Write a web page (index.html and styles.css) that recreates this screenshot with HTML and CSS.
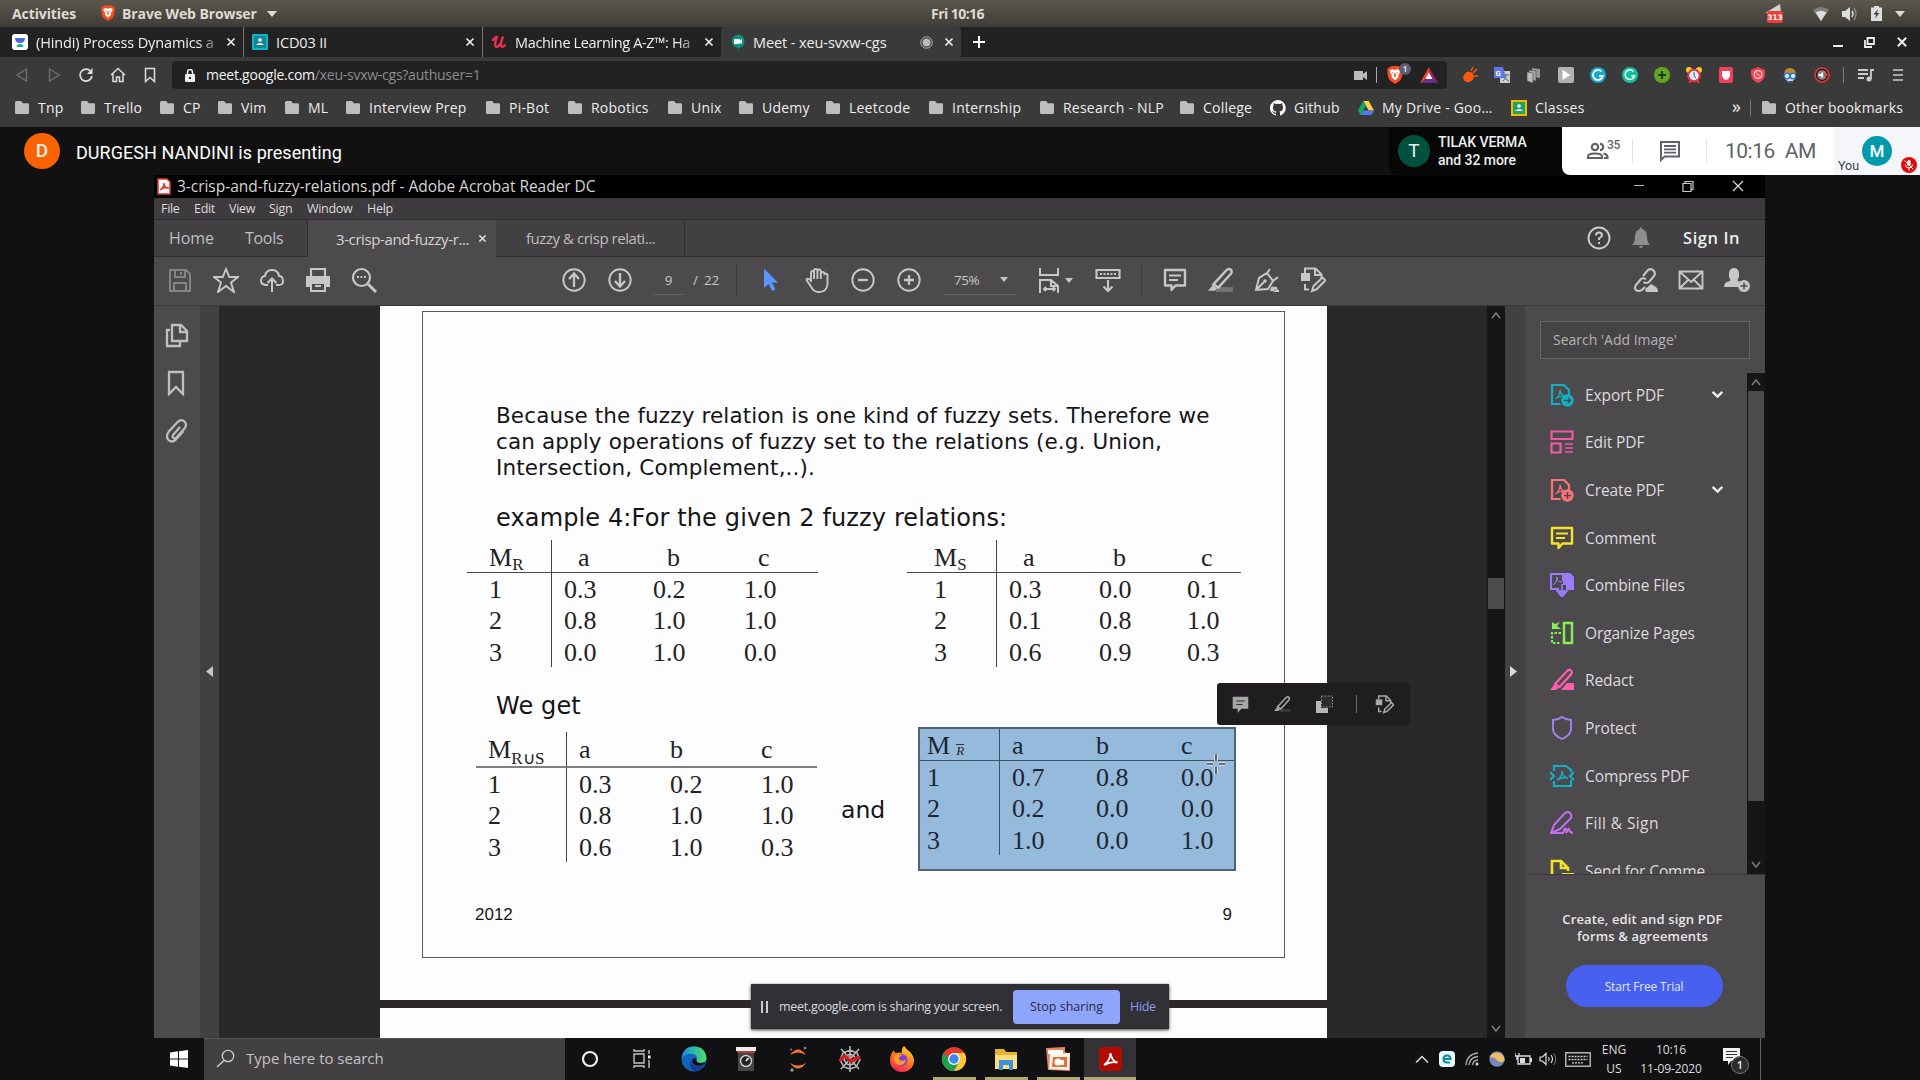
FILE: index.html
```html
<!DOCTYPE html>
<html lang="en">
<head>
<meta charset="utf-8">
<title>Meet - xeu-svxw-cgs</title>
<link rel="stylesheet" href="styles.css">
</head>
<body>
<svg class="defs" width="0" height="0">
  <defs>
    <symbol id="folder" viewBox="0 0 14 13"><path d="M0 1.5Q0 0 1.5 0H6l2 2.2h4.8Q14 2.2 14 3.5v8q0 1.5-1.3 1.5H1.3Q0 13 0 11.500z" fill="#bdbdbd"/></symbol>
    <symbol id="x" viewBox="0 0 10 10"><path d="M1.500 1.500l7 7M8.500 1.500l-7 7" stroke="currentColor" stroke-width="1.700" fill="none"/></symbol>
    <symbol id="brave" viewBox="0 0 16 18"><path d="M4.500 0h7l1.500 1.600 1.700-.2L16 4l-.6 1.500.3 2.500-2 6L8 18l-5.700-4-2-6 .3-2.500L0 4l1.300-2.600L3 1.600z" fill="#fb4a1d"/><path d="M3 4l2.500-.8L8 4l2.500-.8L13 4l.3 2-2 3 .2 2L8 14.500 4.500 11l.2-2-2-3z" fill="#fff"/><path d="M4.300 6l2.200.8-.5 1zM11.700 6l-2.200.8.5 1zM7.300 7h1.400v2.300l.8.700L8 11l-1.500-1 .8-.7z" fill="#fb4a1d"/></symbol>
    <symbol id="pen" viewBox="0 0 24 24"><path d="M5 16L17.500 2.500q2-1.500 3.500 0t.3 3.500L9.500 19z" fill="none" stroke="currentColor" stroke-width="2.200"/><path d="M4.500 16.500l4 3.500-2.500 2H0z" fill="currentColor"/></symbol>
    <symbol id="note" viewBox="0 0 24 24"><path d="M2 2h20v15.500H12.500L8.500 22v-4.500H2z" fill="none" stroke="currentColor" stroke-width="2.400" stroke-linejoin="round"/><path d="M6 7.500h12M6 12h9" stroke="currentColor" stroke-width="1.900"/></symbol>
    <symbol id="editdoc" viewBox="0 0 26 26"><path d="M1 6h9v8H1z" fill="currentColor"/><path d="M5 6V1.500h10.500l6 6V11M15 2v6h6M5 17v5.500h4" fill="none" stroke="currentColor" stroke-width="2"/><path d="M12 24l1.500-5 9-8.500 3 2.800-9 9z" fill="none" stroke="currentColor" stroke-width="2"/></symbol>
    <symbol id="pdf" viewBox="0 0 24 24"><path d="M10.500 21H2V2h12l5 5v5" fill="none" stroke="currentColor" stroke-width="2.200"/><path d="M5.500 16q3.500-2 4.500-8 .2-2 .2-.5.300 4.500 5 6-4.500-1-9 1.500" fill="none" stroke="currentColor" stroke-width="1.300"/></symbol>
    <symbol id="down" viewBox="0 0 12 8"><path d="M1.500 1.500L6 6l4.500-4.500" fill="none" stroke="currentColor" stroke-width="2.200"/></symbol>
    <symbol id="arrow" viewBox="0 0 10 6"><path d="M0 0h10L5 6z" fill="currentColor"/></symbol>
    <symbol id="thin" viewBox="0 0 10 8"><path d="M1 7l4-5 4 5" fill="none" stroke="currentColor" stroke-width="1.700"/></symbol>
  </defs>
</svg>

<header class="gnome">
  <span class="g-act">Activities</span>
  <svg class="g-brave" width="14" height="16"><use href="#brave"/></svg>
  <span class="g-app">Brave Web Browser</span>
  <svg width="10" height="6"><use href="#arrow"/></svg>
  <span class="g-clock">Fri 10:16</span>
  <div class="g-tray">
    <svg width="18" height="20" viewBox="0 0 18 20"><path d="M0 9L15 0l1 9z" fill="#ccd6dd"/><rect x="2" y="7" width="16" height="12" rx="2" fill="#f23c36"/><text x="10" y="16" text-anchor="middle" font-size="7.500" fill="#fff" font-family="DejaVu Sans">313</text></svg>
    <svg class="t-wifi" width="16" height="14" viewBox="0 0 16 14"><path d="M0 3q8-6 16 0L8 14z" fill="#827f79"/><path d="M2.500 5.500q5.500-3.500 11 0L8 14z" fill="#ddd"/></svg>
    <svg width="16" height="14" viewBox="0 0 16 14"><path d="M0 4h3l5-4v14l-5-4H0z" fill="#ddd"/><path d="M10 4q2 3 0 6" stroke="#ddd" stroke-width="1.500" fill="none"/><path d="M12 1q4 6 0 12" stroke="#8b8881" stroke-width="1.500" fill="none"/></svg>
    <svg width="11" height="15" viewBox="0 0 11 15"><path d="M3 0h5v1.500h3V15H0V1.500h3z" fill="#ddd"/><path d="M7 3L2.500 8.500h2.700L4 12.500 8.500 7H5.800z" fill="#45433d"/></svg>
    <svg width="10" height="6"><use href="#arrow"/></svg>
  </div>
</header>

<nav class="tabs">
  <div class="tab">
    <svg width="16" height="16" viewBox="0 0 16 16"><rect width="16" height="16" rx="3" fill="#fff"/><path d="M3 4h10q0 5-5 5T3 4z" fill="#4b66ee"/><path d="M4.500 13q.5-3 3.500-3t3.500 3z" fill="#15b87b"/></svg>
    <span class="t-text fade">(Hindi) Process Dynamics a</span><svg class="x" width="10" height="10"><use href="#x"/></svg>
  </div>
  <div class="tab">
    <svg width="16" height="16" viewBox="0 0 16 16"><rect width="16" height="16" rx="1" fill="#10b4c8"/><rect x="2" y="2" width="12" height="12" fill="#138694"/><circle cx="8" cy="6" r="1.800" fill="#fff"/><path d="M4 11q4-4 8 0z" fill="#fff"/></svg>
    <span class="t-text">ICD03 II</span><svg class="x" width="10" height="10"><use href="#x"/></svg>
  </div>
  <div class="tab nosep">
    <svg width="16" height="16" viewBox="0 0 16 16"><path d="M1.500 7q2.500-4.500 4.300-4-1.800 5-1.600 8 .3 2.700 2.300 1.800T10 8.500L12 2.500M12 2.500q-2.500 7-1.700 9.500 1.200 2.200 4.200-1.500" fill="none" stroke="#ef2d4c" stroke-width="2.300"/></svg>
    <span class="t-text fade tight">Machine Learning A-Z™: Ha</span><svg class="x" width="10" height="10"><use href="#x"/></svg>
  </div>
  <div class="tab active">
    <svg width="16" height="16" viewBox="0 0 16 16"><path d="M8 .5a6.800 6.800 0 0 1 1.500 13.300L8 16v-2A6.800 6.800 0 0 1 8 .5z" fill="#0b9683"/><path d="M4 5h6v1.500L12 5v5l-2-1.300V10H4z" fill="#fff"/></svg>
    <span class="t-text">Meet - xeu-svxw-cgs</span>
    <svg class="rec" width="13" height="13" viewBox="0 0 13 13"><circle cx="6.500" cy="6.500" r="5.700" fill="none" stroke="#b8b8bf" stroke-width="1"/><circle cx="6.500" cy="6.500" r="4" fill="#b8b8bf"/></svg>
    <svg class="x" width="10" height="10"><use href="#x"/></svg>
  </div>
  <svg class="plus" width="12" height="12" viewBox="0 0 12 12"><path d="M6 0v12M0 6h12" stroke="#fff" stroke-width="2"/></svg>
  <div class="winctl">
    <svg width="10" height="12" viewBox="0 0 10 12"><path d="M0 10h10" stroke="#eee" stroke-width="2"/></svg>
    <svg width="11" height="11" viewBox="0 0 11 11"><path d="M3.500 1h6.500v6H3.500zM1 3v7h7" fill="none" stroke="#eee" stroke-width="1.800"/></svg>
    <svg width="12" height="12"><use href="#x"/></svg>
  </div>
</nav>

<div class="bar">
  <div class="navs">
    <svg width="14" height="16" viewBox="0 0 14 16"><path d="M11.500 2v12L2 8z" fill="none" stroke="#6d6d6d" stroke-width="1.400"/></svg>
    <svg width="14" height="16" viewBox="0 0 14 16"><path d="M2.500 2v12L12 8z" fill="none" stroke="#6d6d6d" stroke-width="1.400"/></svg>
    <svg width="16" height="16" viewBox="0 0 16 16"><path d="M12.500 4A6 6 0 1 0 14 9" fill="none" stroke="#ddd" stroke-width="1.700"/><path d="M14.500 1v6H9z" fill="#ddd"/></svg>
    <svg width="16" height="16" viewBox="0 0 16 16"><path d="M1 8l7-6.500L15 8M3 7v7.500h3.500V10h3v4.500H13V7" fill="none" stroke="#ddd" stroke-width="1.500"/></svg>
    <svg width="16" height="16" viewBox="0 0 16 16"><path d="M3.500 1.500h9v13L8 10.500l-4.500 4z" fill="none" stroke="#ddd" stroke-width="1.500"/></svg>
  </div>
  <div class="url">
    <svg width="10" height="13" viewBox="0 0 10 13"><rect y="5" width="10" height="8" rx="1" fill="#eee"/><path d="M2.500 6V3a2.500 2.500 0 0 1 5 0v3" fill="none" stroke="#eee" stroke-width="1.500"/><path d="M4 8h2v2H4z" fill="#222"/></svg>
    <span class="u-host">meet.google.com</span><span class="u-path">/xeu-svxw-cgs?authuser=1</span>
    <div class="u-right">
      <svg width="13" height="9" viewBox="0 0 13 9"><path d="M0 0h9v3l4-3v9L9 6v3H0z" fill="#bbb"/></svg>
      <i class="vline"></i>
      <span class="shield"><svg width="16" height="18"><use href="#brave"/></svg><b>1</b></span>
      <svg width="18" height="16" viewBox="0 0 18 16"><path d="M9 0L0 16h9z" fill="#ff4724"/><path d="M9 0l9 16H9z" fill="#9e1f63"/><path d="M0 16h18l-5-4H5z" fill="#662d91"/><path d="M9 5.500L5.500 12h7z" fill="#fff"/></svg>
    </div>
  </div>
  <div class="exts">
    <svg viewBox="0 0 16 16"><ellipse cx="6.500" cy="10" rx="5.500" ry="5" transform="rotate(-40 6.500 10)" fill="#fa5a0f"/><path d="M9 4l2-4M11 6l4-4M12 9h4" stroke="#fa5a0f" stroke-width="1.500"/></svg>
    <svg viewBox="0 0 16 16"><rect x="6" y="4" width="10" height="12" fill="#ccc"/><path d="M9 8h6M12 7v2q-1 4-3 5M11 10q1 3 4 4" stroke="#666" fill="none"/><path d="M0 0h9l3 11H0z" fill="#5b77e8"/><text x="1.500" y="8.500" font-size="8" font-weight="700" fill="#fff" font-family="Roboto">G</text></svg>
    <svg viewBox="0 0 16 16"><path d="M6 1l8 1v9l-8-1z" fill="#999"/><path d="M3 3l7 1v10l-7-1z" fill="#aaa" stroke="#444" stroke-width=".6"/><path d="M1 5l6 1v10l-6-2z" fill="#bbb" stroke="#444" stroke-width=".6"/></svg>
    <svg viewBox="0 0 16 16"><rect width="16" height="16" rx="2" fill="#b2b2b2"/><path d="M4.500 3v10l8-5z" fill="#fff"/></svg>
    <svg viewBox="0 0 16 16"><circle cx="8" cy="8" r="8" fill="#11a9cd"/><path d="M11.500 4.500A5 5 0 1 0 12.800 9H9" fill="none" stroke="#fff" stroke-width="1.800"/></svg>
    <svg viewBox="0 0 16 16"><circle cx="8" cy="8" r="8" fill="#11c39a"/><path d="M11.500 4.500A4.800 4.800 0 1 0 12.500 9H9.500" fill="none" stroke="#fff" stroke-width="1.500"/></svg>
    <svg viewBox="0 0 16 16"><circle cx="8" cy="8" r="8" fill="#63a71f"/><path d="M8 4v8M4 8h8" stroke="#243b0d" stroke-width="2"/></svg>
    <svg viewBox="0 0 16 16"><circle cx="3" cy="3" r="3" fill="#ffca28"/><circle cx="13" cy="3" r="3" fill="#ffca28"/><path d="M3 16l2-3M13 16l-2-3" stroke="#e33" stroke-width="2"/><circle cx="8" cy="8.500" r="5.700" fill="#dff1ff" stroke="#e93443" stroke-width="2"/><path d="M8 5v4l2 2" stroke="#357" fill="none"/></svg>
    <svg viewBox="0 0 16 16"><rect x="1" width="14" height="16" rx="2" fill="#f5405a"/><path d="M4 4h8v5q-1 3-4 4-3-1-4-4z" fill="#fff"/></svg>
    <svg viewBox="0 0 16 16"><path d="M8 0l7 3v5q-1 6-7 8-6-2-7-8V3z" fill="#f0414f"/><circle cx="8" cy="7.500" r="4" fill="none" stroke="#fff"/><path d="M6 5.500l4 4" stroke="#fff"/></svg>
    <svg viewBox="0 0 16 16"><path d="M2 8q0-7 6-7t6 7z" fill="#c08a2d"/><path d="M3 8h10v4q-5 5-10 0z" fill="#f5d3a0"/><circle cx="5" cy="9" r="2.800" fill="#cfe8ff" stroke="#2473c8" stroke-width="1.300"/><circle cx="11" cy="9" r="2.800" fill="#cfe8ff" stroke="#2473c8" stroke-width="1.300"/><path d="M5 14h6v2H5z" fill="#35a"/></svg>
    <svg viewBox="0 0 16 16"><circle cx="8" cy="8" r="7" fill="#181818" stroke="#e0313b" stroke-width="1.700"/><circle cx="8" cy="8" r="4.800" fill="#888"/><path d="M4.500 7h2L9 5v6L6.500 9h-2z" fill="#fff"/><path d="M11 6v4M12.500 8H16" stroke="#e0313b" stroke-width="1.300"/></svg>
  </div>
  <i class="vline dim"></i>
  <svg class="queue" width="16" height="14" viewBox="0 0 16 14"><path d="M0 2h10M0 6h10M0 10h6" stroke="#ccc" stroke-width="1.800"/><path d="M13 11V2h3" fill="none" stroke="#ccc" stroke-width="1.800"/><circle cx="11" cy="11" r="2.500" fill="#ccc"/></svg>
  <svg width="10" height="14" viewBox="0 0 10 14"><path d="M0 2h10M0 7h10M0 12h10" stroke="#ccc" stroke-width="1.700"/></svg>
</div>

<div class="marks">
  <a><svg><use href="#folder"/></svg>Tnp</a><a><svg><use href="#folder"/></svg>Trello</a><a><svg><use href="#folder"/></svg>CP</a><a><svg><use href="#folder"/></svg>Vim</a><a><svg><use href="#folder"/></svg>ML</a><a><svg><use href="#folder"/></svg>Interview Prep</a><a><svg><use href="#folder"/></svg>Pi-Bot</a><a><svg><use href="#folder"/></svg>Robotics</a><a><svg><use href="#folder"/></svg>Unix</a><a><svg><use href="#folder"/></svg>Udemy</a><a><svg><use href="#folder"/></svg>Leetcode</a><a><svg><use href="#folder"/></svg>Internship</a><a><svg><use href="#folder"/></svg>Research - NLP</a><a><svg><use href="#folder"/></svg>College</a>
  <a class="site"><svg viewBox="0 0 16 16"><path d="M8 0a8 8 0 0 0-2.500 15.600c.4.100.5-.2.500-.4v-1.500c-2.200.5-2.700-1-2.700-1-.4-.9-.9-1.200-.9-1.200-.7-.5.100-.5.100-.5.800.1 1.200.8 1.200.8.700 1.200 1.900.9 2.300.7.100-.5.300-.9.500-1.100-1.800-.2-3.600-.9-3.600-4 0-.9.300-1.600.8-2.100-.1-.2-.4-1 .1-2.100 0 0 .7-.2 2.200.8a7.500 7.500 0 0 1 4 0c1.500-1 2.200-.8 2.200-.8.400 1.100.2 1.900.1 2.100.5.600.8 1.300.8 2.100 0 3.100-1.900 3.700-3.700 3.900.3.300.6.800.6 1.500v2.300c0 .2.100.5.500.4A8 8 0 0 0 8 0z" fill="#fff"/></svg>Github</a>
  <a class="site"><svg viewBox="0 0 16 16"><path d="M5.300 1h5.400L16 10.500h-5.300z" fill="#ffcf48"/><path d="M5.300 1L0 10.500 2.700 15 8 5.800z" fill="#11a861"/><path d="M5.300 10.500H16L13.300 15H2.700z" fill="#4c7cf3"/></svg>My Drive - Goo…</a>
  <a class="site"><svg viewBox="0 0 16 16"><rect width="16" height="16" fill="#f4bc00"/><rect x="2" y="2" width="12" height="12" fill="#21a363"/><circle cx="8" cy="6" r="1.800" fill="#fff"/><path d="M4 11q4-4 8 0z" fill="#fff"/></svg>Classes</a>
  <span class="more">»</span><i class="vline dim"></i>
  <a class="other"><svg><use href="#folder"/></svg>Other bookmarks</a>
</div>

<div class="meet">
  <span class="av av-d">D</span><span class="pres">DURGESH NANDINI is presenting</span>
  <div class="people"><span class="av av-t">T</span><p>TILAK VERMA<br>and 32 more</p></div>
  <div class="ctl">
    <svg width="24" height="24" viewBox="0 0 24 24"><g fill="none" stroke="#5f6368" stroke-width="2.200"><circle cx="9" cy="8" r="3.200"/><path d="M2 19v-1.500q0-3 7-3t7 3V19z"/><path d="M14 4.800a3.200 3.200 0 0 1 0 6.400M17.500 14.500q4 1 4 3.500v1H18"/></g></svg>
    <sup>35</sup><i></i>
    <svg width="24" height="24" viewBox="0 0 24 24"><path d="M3 3h18v14.500H6.500L3 21z" fill="none" stroke="#5f6368" stroke-width="2"/><path d="M6 7h12M6 10.300h12M6 13.600h12" stroke="#5f6368" stroke-width="1.800"/></svg>
    <i></i><time>10:16</time><time>AM</time>
  </div>
  <div class="you"><span>You</span><span class="av av-m">M</span>
    <svg width="16" height="16" viewBox="0 0 16 16"><circle cx="8" cy="8" r="8" fill="#e00b0b"/><rect x="6.300" y="3" width="3.400" height="6" rx="1.700" fill="#fff"/><path d="M4.500 7.500q0 3.500 3.500 3.500t3.500-3.500M8 11v2.500M3.500 3.500l9 9" fill="none" stroke="#fff"/></svg>
  </div>
</div>

<main class="share">
  <div class="a-title">
    <svg width="14" height="17" viewBox="0 0 14 17"><path d="M1 1h9l3 3v12H1z" fill="#fff" stroke="#e5352d" stroke-width="1.500"/><path d="M3 12q4-2 4-7 0 5 5 5-4-1-8 1" fill="none" stroke="#e5352d" stroke-width="1.500"/></svg>
    <span>3-crisp-and-fuzzy-relations.pdf - Adobe Acrobat Reader DC</span>
    <div class="a-win">
      <svg width="10" height="12" viewBox="0 0 10 12"><path d="M0 5.500h10" stroke="#bbb"/></svg>
      <svg width="12" height="12" viewBox="0 0 12 12"><path d="M1 3.500h8v8H1zM3 3.500v-2h8v8H9" fill="none" stroke="#ccc" stroke-width="1.200"/></svg>
      <svg width="12" height="12" viewBox="0 0 12 12"><path d="M1 1l10 10M11 1L1 11" stroke="#ddd" stroke-width="1.200"/></svg>
    </div>
  </div>
  <div class="a-menu"><span>File</span><span>Edit</span><span>View</span><span>Sign</span><span>Window</span><span>Help</span></div>
  <div class="a-tabs">
    <div class="home"><span>Home</span><span>Tools</span></div>
    <div class="doc on"><span>3-crisp-and-fuzzy-r...</span><svg width="9" height="9"><use href="#x"/></svg></div>
    <div class="doc"><span>fuzzy &amp; crisp relati...</span></div>
    <div class="sign">
      <svg width="24" height="24" viewBox="0 0 24 24"><circle cx="12" cy="12" r="10.500" fill="none" stroke="#ccc" stroke-width="1.900"/><path d="M9 9.500q0-3 3-3t3 2.700q0 1.500-3 3.300v1.500M12 16v2" fill="none" stroke="#ccc" stroke-width="2"/></svg>
      <svg width="18" height="22" viewBox="0 0 18 22"><path d="M0 18q3-3 3-8 0-7 5-8 0-2 1-2t1 2q5 1 5 8 0 5 3 8zM7 19h4q0 2-2 2t-2-2z" fill="#8f8d90"/></svg>
      <b>Sign In</b>
    </div>
  </div>
  <div class="a-tools">
    <div class="cells">
      <svg class="off" viewBox="0 0 26 26"><path d="M3 3h16l4 4v17H3zM8 3v7h10V3M7 24v-8h12v8M14 5v3" fill="none" stroke="currentColor" stroke-width="2"/></svg>
      <svg viewBox="0 0 26 26"><path d="M13 2l3.300 8H25l-7 5.500L21 25l-8-6-8 6 3-9.500L1 10h8.700z" fill="none" stroke="currentColor" stroke-width="1.900"/></svg>
      <svg viewBox="0 0 26 26"><path d="M9 18H6.500q-5-1-4.500-5 1-4 4-4 1-6 7-6t7 6q3.500 0 4 4.500t-4.500 4.500H17M13 25V12M8.500 16l4.500-4.500 4.500 4.500" fill="none" stroke="currentColor" stroke-width="2"/></svg>
      <svg viewBox="0 0 26 26"><path d="M6 9V2h14v7" fill="none" stroke="currentColor" stroke-width="2.200"/><path d="M1 9h24v11h-4v-5H5v5H1z" fill="currentColor"/><path d="M6 16h14v8H6zM10 19h6" fill="none" stroke="currentColor" stroke-width="2"/></svg>
      <svg viewBox="0 0 26 26"><circle cx="10.500" cy="10.500" r="8.500" fill="none" stroke="currentColor" stroke-width="2.200"/><path d="M17 17l8 8" stroke="currentColor" stroke-width="3"/><path d="M6 10h2M9.500 10h2M13 10h2" stroke="currentColor" stroke-width="2"/></svg>
    </div>
    <div class="cells c-page">
      <svg viewBox="0 0 26 26"><circle cx="13" cy="13" r="10.700" fill="none" stroke="currentColor" stroke-width="1.900"/><path d="M13 20V7M8 12l5-5.500 5 5.500" fill="none" stroke="currentColor" stroke-width="2.300"/></svg>
      <svg viewBox="0 0 26 26"><circle cx="13" cy="13" r="10.700" fill="none" stroke="currentColor" stroke-width="1.900"/><path d="M13 6v13M8 14l5 5.500 5-5.500" fill="none" stroke="currentColor" stroke-width="2.300"/></svg>
    </div>
    <span class="field f-pg">9</span><span class="of">/ &nbsp;22</span><i class="sep"></i>
    <div class="cells c-ptr">
      <svg viewBox="0 0 26 26"><path d="M6 1.500l14 14h-6l3.500 7-3.500 1.500-3.300-7L6 21z" fill="#5b93ff"/></svg>
      <svg viewBox="0 0 26 26"><path d="M7 15V6q0-2 1.500-2T10 6v6M10 6V4q0-2 1.700-2t1.700 2v8M13.500 4.500q0-2 1.700-2t1.600 2V12M17 7q0-2 1.700-2t1.800 2q2.500-1 3 1v9q-1 8-8 8-5 0-7-3l-6-9q0-3 4.500.5V6" fill="none" stroke="currentColor" stroke-width="1.900"/></svg>
      <svg viewBox="0 0 26 26"><circle cx="13" cy="13" r="10.700" fill="none" stroke="currentColor" stroke-width="1.900"/><path d="M8 13h10" stroke="currentColor" stroke-width="2.300"/></svg>
      <svg viewBox="0 0 26 26"><circle cx="13" cy="13" r="10.700" fill="none" stroke="currentColor" stroke-width="1.900"/><path d="M8 13h10M13 8v10" stroke="currentColor" stroke-width="2.300"/></svg>
    </div>
    <span class="field f-zoom">75%<svg width="8" height="5"><use href="#arrow"/></svg></span>
    <svg class="fit" viewBox="0 0 26 26"><path d="M4 1v7h18V1M4 26V13h11l7 6v7M15 13v6h6M8 22h11M10 20l-2 2 2 2M17 20l2 2-2 2" fill="none" stroke="currentColor" stroke-width="2"/></svg>
    <svg class="fitc" width="8" height="5"><use href="#arrow"/></svg>
    <svg class="kb" viewBox="0 0 26 26"><path d="M1.500 3h23v8h-23zM13 13v11M8.500 19.500L13 24l4.500-4.500" fill="none" stroke="currentColor" stroke-width="2.100"/><path d="M5 7h16" stroke="currentColor" stroke-width="2" stroke-dasharray="2 1.500"/></svg>
    <i class="sep s2"></i>
    <div class="cells">
      <svg viewBox="0 0 26 26"><use href="#note" x="1" y="1" width="24" height="24"/></svg>
      <svg viewBox="0 0 26 26"><path d="M10 20h15v5H7z" fill="#757376"/><use href="#pen" width="26" height="26"/></svg>
      <svg viewBox="0 0 26 26"><path d="M2 23L5 11l8-5 6 8-5 8zM2 23l8-8M13 6l3-4M19 14l5-4M17 24q1-5 2-3t0 3q2-5 3-3t0 3h3" fill="none" stroke="currentColor" stroke-width="2"/><circle cx="11" cy="14" r="1.800" fill="currentColor"/></svg>
      <svg viewBox="0 0 26 26"><use href="#editdoc"/></svg>
    </div>
    <div class="cells c-right">
      <svg viewBox="0 0 26 26"><path d="M11 9l5-6q3-2 5.500.5t.5 5.500l-5 6q-3 2-5.500 0M14 12q-3-1.500-5 0l-5 6q-2 3 0 5t6 0l3-3" fill="none" stroke="currentColor" stroke-width="2.100"/><path d="M14 25q-2-4 2-5 3-5 6-1 4 1 4 6z" fill="currentColor"/></svg>
      <svg viewBox="0 0 26 26"><path d="M1.500 4.500h23v17h-23zM2 5l11 10L24 5M2 21l8-8M24 21l-8-8" fill="none" stroke="currentColor" stroke-width="1.900"/></svg>
      <svg viewBox="0 0 26 26"><path d="M0 20q0-5 6-6 1-1-1-4-1-9 5-9t5 9q-2 3-1 4 3 1 3 2l-3 4z" fill="currentColor"/><circle cx="20" cy="19" r="6" fill="currentColor"/><path d="M20 15.500v7M16.500 19h7" stroke="#4d4a4d" stroke-width="1.500"/></svg>
    </div>
  </div>

  <div class="a-body">
    <aside class="rail">
      <svg viewBox="0 0 26 26"><path d="M8 3h9l6 6v10H8zM16 3v7h6M6 8H3v16h13v-4" fill="none" stroke="currentColor" stroke-width="2.300"/></svg>
      <svg viewBox="0 0 26 26"><path d="M5 2h14v22l-7-7-7 7z" fill="none" stroke="currentColor" stroke-width="2.300"/></svg>
      <svg viewBox="0 0 26 26"><path d="M16 9l-7 8q-1 2 .5 3t3-.5l8-9q3-4 0-7t-7 .500l-9 10q-3 5 0 8t7 0l8-9" fill="none" stroke="currentColor" stroke-width="2.200"/></svg>
    </aside>
    <div class="strip s-left"><svg width="7" height="11" viewBox="0 0 7 11"><path d="M7 0v11L0 5.500z" fill="#c5c3c5"/></svg></div>
    <section class="view">
      <div class="page">
        <div class="frame">
          <p class="para">Because the fuzzy relation is one kind of fuzzy sets. Therefore we<br>can apply operations of fuzzy set to the relations (e.g. Union,<br>Intersection, Complement,..).</p>
          <h2 class="ex">example 4:For the given 2 fuzzy relations:</h2>
          <div class="row row1">
            <div class="mx mr"><span>M<sub>R</sub></span><span>a</span><span>b</span><span>c</span><span>1</span><span>0.3</span><span>0.2</span><span>1.0</span><span>2</span><span>0.8</span><span>1.0</span><span>1.0</span><span>3</span><span>0.0</span><span>1.0</span><span>0.0</span></div>
            <div class="mx ms"><span>M<sub>S</sub></span><span>a</span><span>b</span><span>c</span><span>1</span><span>0.3</span><span>0.0</span><span>0.1</span><span>2</span><span>0.1</span><span>0.8</span><span>1.0</span><span>3</span><span>0.6</span><span>0.9</span><span>0.3</span></div>
          </div>
          <h2 class="get">We get</h2>
          <div class="row row2">
            <div class="mx mu"><span>M<sub>R∪S</sub></span><span>a</span><span>b</span><span>c</span><span>1</span><span>0.3</span><span>0.2</span><span>1.0</span><span>2</span><span>0.8</span><span>1.0</span><span>1.0</span><span>3</span><span>0.6</span><span>1.0</span><span>0.3</span></div>
            <span class="and">and</span>
            <div class="sel"><div class="mx mc"><span>M<sub class="bar-r">R</sub></span><span>a</span><span>b</span><span>c</span><span>1</span><span>0.7</span><span>0.8</span><span>0.0</span><span>2</span><span>0.2</span><span>0.0</span><span>0.0</span><span>3</span><span>1.0</span><span>0.0</span><span>1.0</span></div></div>
          </div>
          <div class="foot"><span>2012</span><span>9</span></div>
        </div>
      </div>
      <div class="page next"></div>
    </section>
    <div class="vscroll"><svg width="10" height="8"><use href="#thin"/></svg><i></i><svg class="flip" width="10" height="8"><use href="#thin"/></svg></div>
    <div class="strip s-right"><svg width="7" height="11" viewBox="0 0 7 11"><path d="M0 0v11l7-5.500z" fill="#dad8da"/></svg></div>
    <aside class="panel">
      <div class="search">Search 'Add Image'</div>
      <div class="listwrap">
        <ul>
          <li><svg class="c1" viewBox="0 0 24 24"><use href="#pdf"/><circle cx="17.500" cy="17.500" r="6.200" fill="currentColor"/><path d="M14 17.500h6M18 15l2.500 2.500L18 20" fill="none" stroke="#4d4a4d" stroke-width="1.500"/></svg>Export PDF<svg class="chev"><use href="#down"/></svg></li>
          <li><svg class="c2" viewBox="0 0 24 24"><path d="M1.500 1.500h21v7.500h-21zM1.500 13.500h9v9h-9z" fill="none" stroke="currentColor" stroke-width="2.200"/><path d="M15 14h8M15 18h8M15 22h8" stroke="currentColor" stroke-width="1.300"/></svg>Edit PDF</li>
          <li><svg class="c3" viewBox="0 0 24 24"><use href="#pdf"/><circle cx="17.500" cy="17.500" r="6.200" fill="currentColor"/><path d="M14 17.500h7M17.500 14v7" stroke="#4d4a4d" stroke-width="1.600"/></svg>Create PDF<svg class="chev"><use href="#down"/></svg></li>
          <li><svg class="c4" viewBox="0 0 24 24"><use href="#note"/></svg>Comment</li>
          <li><svg class="c5" viewBox="0 0 24 24"><path d="M9 16H1V1h12v7" fill="none" stroke="currentColor" stroke-width="2"/><path d="M3 12q4-2 4-8 0 5 5 5" fill="none" stroke="currentColor"/><path d="M13 0h7l4 4v13h-8v-5h-3z" fill="currentColor"/><path d="M12 11v9M7 18h10l-5 6z" fill="currentColor" stroke="currentColor" stroke-width="1.500"/></svg>Combine Files</li>
          <li><svg class="c6" viewBox="0 0 24 24"><path d="M14 2h8v20h-8z" fill="none" stroke="currentColor" stroke-width="2.400"/><path d="M11 12H2v10h9" fill="none" stroke="currentColor" stroke-width="2.200" stroke-dasharray="2.500 1.500"/><path d="M2 1l3 2 5-2-3 4 4 3H2z" fill="currentColor"/></svg>Organize Pages</li>
          <li><svg class="c7" viewBox="0 0 24 24"><path d="M12 21l5-6h7v7H11z" fill="currentColor"/><use href="#pen"/></svg>Redact</li>
          <li><svg class="c8" viewBox="0 0 24 24"><path d="M12 1q4 3 9 3v9q0 6-9 10-9-4-9-10V4q5 0 9-3z" fill="none" stroke="currentColor" stroke-width="1.900"/></svg>Protect</li>
          <li><svg class="c1" viewBox="0 0 24 24"><path d="M4 7V2h12l5 4v2M4 17v5h17v-6M0 8l4 4-4 4M24 8l-4 4 4 4" fill="none" stroke="currentColor" stroke-width="2.200"/><path d="M7 16q5-2 5-9 0 6 6 7-6-1-11 2" fill="none" stroke="currentColor" stroke-width="1.500"/></svg>Compress PDF</li>
          <li class="wide"><svg class="c9" viewBox="0 0 24 24"><path d="M1 22l3-8L15 2q3-2 5 0t1 5L10 18zM1 22h12q2-6 3-4t0 4q3-6 3-3.500T23 22" fill="none" stroke="currentColor" stroke-width="2.100"/></svg>Fill &amp; Sign</li>
          <li><svg class="c4" viewBox="0 0 24 24"><path d="M10 22H2V2h9l7 7v3M11 2v7h7" fill="none" stroke="currentColor" stroke-width="2.600"/><path d="M12 14h12v8H12z" fill="currentColor"/></svg>Send for Comme</li>
        </ul>
        <div class="lscroll"><svg width="10" height="8"><use href="#thin"/></svg><i></i><svg class="flip" width="10" height="8"><use href="#thin"/></svg></div>
      </div>
      <div class="trial"><p>Create, edit and sign PDF<br>forms &amp; agreements</p><button>Start Free Trial</button></div>
    </aside>
  </div>

  <div class="pop">
    <svg width="17" height="17" viewBox="0 0 24 24"><path d="M1 1h22v17H13l-5 6v-6H1z" fill="#a8a7a8"/><path d="M6 7h12M6 12h9" stroke="#333" stroke-width="1.500"/></svg>
    <svg width="17" height="18" viewBox="0 0 24 24"><path d="M10 19h13v4H8z" fill="#3c3b3d"/><use href="#pen"/></svg>
    <svg width="17" height="18" viewBox="0 0 17 18"><path d="M0 6h5v7h7v5H0z" fill="#b9b8b9"/><rect x="5.500" y="1" width="11" height="11" fill="#2c2b2d" stroke="#999" stroke-dasharray="1.500 1.500"/></svg>
    <i></i>
    <svg width="19" height="19"><use href="#editdoc"/></svg>
  </div>
  <svg class="cross" width="18" height="20" viewBox="0 0 18 20"><g stroke="#dfe9f2" stroke-width="3.500"><path d="M9 0v7M9 13v7M0 10h6M12 10h6"/></g><g stroke="#444" stroke-width="1.600"><path d="M9 0v7M9 13v7M0 10h6M12 10h6"/></g></svg>
  <div class="sharing"><i></i><span>meet.google.com is sharing your screen.</span><button>Stop sharing</button><a>Hide</a></div>

  <footer class="task">
    <div class="start"><svg width="18" height="18" viewBox="0 0 18 18"><path d="M0 2.500L8 1.300v7.200H0zM9 1.200L18 0v8.500H9zM0 9.500h8v7.200l-8-1.200zM9 9.500h9V18l-9-1.200z" fill="#fff"/></svg></div>
    <div class="find"><svg width="19" height="19" viewBox="0 0 19 19"><circle cx="12" cy="7" r="5.700" fill="none" stroke="#ccc" stroke-width="1.300"/><path d="M8 11.500L1 18" stroke="#ccc" stroke-width="1.500"/></svg>Type here to search</div>
    <div class="apps">
      <span><svg viewBox="0 0 26 26"><circle cx="13" cy="13" r="7" fill="none" stroke="#eee" stroke-width="2.200"/></svg></span>
      <span><svg viewBox="0 0 26 26"><path d="M5 8h10v9H5zM5 3v2h10V3M5 22v-2h10v2M20 4v4M20 14v8" fill="none" stroke="#c4c4c4" stroke-width="1.400"/><path d="M19 9.500h2.500v3H19z" fill="#fff"/></svg></span>
      <span><svg viewBox="0 0 26 26"><defs><linearGradient id="eg" x1="0" y1="0" x2="1" y2="0"><stop offset="0" stop-color="#1591dc"/><stop offset="1" stop-color="#4ee16c"/></linearGradient></defs><circle cx="13" cy="13" r="12.500" fill="#1463bd"/><path d="M1 12Q2 .5 13 .5T25.500 12q0 5-6 5-4 0-4-2.500 2-5-3-6.500Q5 6.500 1 12z" fill="url(#eg)"/><path d="M10 12q-1 8 7 8 4 0 6.500-2-4 7-10.500 7Q7 22 10 12z" fill="#123c95"/><path d="M15.500 14.500q0 2.500 4 2.500 3 0 5-1.500l-1 2.500q-8 4-12-1-1-4 2-5 2 0 2 2.500z" fill="#111"/></svg></span>
      <span><svg viewBox="0 0 26 26"><path d="M5 6h16v19H5z" fill="#444"/><path d="M3 1h20v4H3z" fill="#eee"/><path d="M4 5h18v2H4z" fill="#b83838"/><circle cx="13" cy="15" r="5.500" fill="#222" stroke="#ccc" stroke-width="1.500"/><path d="M13 15l2.500-3" stroke="#fff" stroke-width="1.500"/></svg></span>
      <span><svg viewBox="0 0 26 26"><path d="M5 9q8-11 16 0-8-5-16 0zM5 17q8 11 16 0-8 5-16 0z" fill="#f37726"/><circle cx="20" cy="2" r="1.300" fill="#888"/><circle cx="6" cy="3.500" r="1" fill="#888"/><circle cx="7" cy="24" r="1.700" fill="#999"/></svg></span>
      <span><svg viewBox="0 0 26 26"><g fill="none" stroke="#bbb" stroke-width="1.500"><path d="M13 4l7 3 3 7-4 7-6 2-6-2-4-7 3-7zM13 8l4 2 2 4-3 4-3 1-3-1-3-4 2-4zM13 0v26M4 3l18 20M22 3L4 23"/></g><path d="M3 15q4-7 7-3t7 2q2-3 6-2" fill="none" stroke="#d21d1d" stroke-width="3.500"/></svg></span>
      <span><svg viewBox="0 0 26 26"><defs><linearGradient id="fg" x1=".8" y1="0" x2=".3" y2="1"><stop offset="0" stop-color="#ffe226"/><stop offset=".5" stop-color="#ff7b1c"/><stop offset="1" stop-color="#f0205e"/></linearGradient></defs><path d="M15 0q2 3 6 6 4 4 4 9a12 11 0 0 1-24 0Q1 8 5 4q0 3 2 3 4-1 6 0-1-4 2-7z" fill="url(#fg)"/><circle cx="12.500" cy="14" r="6" fill="#7a3ee0"/><path d="M5 10q5-3 9 0-5 0-4 3 3 4 7 0-1 7-7 6t-5-9z" fill="#ff9a1c"/></svg></span>
      <span class="run"><svg viewBox="0 0 26 26"><circle cx="13" cy="13" r="12" fill="#e33b2e"/><path d="M2.600 7A12 12 0 0 0 13 25l5-9-5 2z" fill="#21a04b"/><path d="M2.600 7L8 16l5 3 5-2-5 8A12 12 0 0 1 2.600 7z" fill="#21a04b"/><path d="M13 7h10.500A12 12 0 0 1 13 25l5.200-9z" fill="#fcc934"/><circle cx="13" cy="13" r="6" fill="#fff"/><circle cx="13" cy="13" r="4.700" fill="#4184f0"/></svg></span>
      <span class="run"><svg viewBox="0 0 26 26"><path d="M2 3h9l2 3h11v17H2z" fill="#e8b32e"/><path d="M2 9h22v14H2z" fill="#fbdf7d"/><path d="M6 24V14h14v10h-4v-5h-6v5z" fill="#3c8fdc"/></svg></span>
      <span class="run"><svg viewBox="0 0 26 26"><path d="M1 2l19-1v5l5 2v17L3 24z" fill="#e8845a"/><path d="M3 4h15v4H3z" fill="#fff"/><path d="M5 8l20-1-1 17-20-1z" fill="#fff3ea"/><path d="M8 11h14v10H7z" fill="#e2703c"/><circle cx="13" cy="16" r="3.500" fill="#fff"/><path d="M13 16v-2h6v5h-3z" fill="#fff"/></svg></span>
      <span class="run cur"><svg viewBox="0 0 26 26"><rect x="2" y="1" width="23" height="24" rx="3" fill="#b30b00"/><path d="M7 19q6-4 6.500-12 1 8 7 9.500-7-1.500-13 2.500" fill="none" stroke="#fff" stroke-width="1.900"/></svg></span>
    </div>
    <div class="tray">
      <svg width="14" height="8" viewBox="0 0 14 8"><path d="M1 7.500l6-6 6 6" fill="none" stroke="#ddd" stroke-width="1.500"/></svg>
      <svg width="16" height="16" viewBox="0 0 16 16"><rect width="16" height="16" rx="4" fill="#eafcff"/><path d="M4.500 8h7q0-3.500-3.500-3.500T4.500 8 8 11.500h3" fill="none" stroke="#0d8ba1" stroke-width="2"/></svg>
      <svg width="14" height="14" viewBox="0 0 14 14"><g fill="none" stroke="#aaa" stroke-width="1.300"><path d="M1 13Q2 2 13 1M4 13Q5 5 13 4.500M7.500 13q.5-4.500 5.500-5"/></g><circle cx="12" cy="12" r="1.500" fill="#ddd"/></svg>
      <svg width="16" height="16" viewBox="0 0 16 16"><circle cx="8" cy="8" r="7.700" fill="#7c86bd"/><path d="M.5 7a7.700 7.700 0 0 1 15 3Q10 13 7 8 4 5 .5 7z" fill="#f4bf5e"/></svg>
      <svg width="17" height="12" viewBox="0 0 17 12"><path d="M3 3h12v8H3zM0 0v3h4V0M2 3v4" fill="none" stroke="#ddd" stroke-width="1.300"/><path d="M5 5h5v5H5zM15 5h2v4h-2z" fill="#ddd"/></svg>
      <svg class="spk" width="18" height="14" viewBox="0 0 18 14"><path d="M1 5h2.500L7 1.500v11L3.500 9H1zM9.500 5q1.500 2 0 4M12 3q3 4 0 8" fill="none" stroke="#ddd" stroke-width="1.200"/><path d="M14.500 1q4.500 6 0 12" fill="none" stroke="#777"/></svg>
      <svg class="keys" width="26" height="15" viewBox="0 0 26 15"><rect x=".8" y=".8" width="24.400" height="13.400" fill="none" stroke="#ccc" stroke-width="1.300"/><path d="M3.500 4.500h19M3.500 7.500h19M7 10.800h12" stroke="#ccc" stroke-width="1.300" stroke-dasharray="2 1"/></svg>
      <p class="lang">ENG<br>US</p>
      <p class="when">10:16<br>11-09-2020</p>
      <span class="note"><svg width="17" height="18" viewBox="0 0 17 18"><path d="M0 0h17v13H8l-3 4v-4H0z" fill="#f3f3f3"/><path d="M3 3.500h11M3 6.500h11M3 9.500h7" stroke="#333"/></svg><b>1</b></span>
    </div>
  </footer>
</main>
</body>
</html>
```
FILE: styles.css
```css
* { box-sizing: border-box; }
body { margin: 0; width: 1920px; height: 1080px; overflow: hidden; background: #111; font-family: "Open Sans", "Noto Sans", sans-serif; color: #eee; }
p, ul, h2 { margin: 0; padding: 0; font-weight: 400; }
svg { display: block; flex: none; }
.defs { position: absolute; }
span, b, a, time { white-space: nowrap; }

/* desktop top bar */
.gnome { height: 27px; display: flex; align-items: center; padding: 0 15px 0 12px; background: linear-gradient(#5b574d, #3f3d38); color: #dfdbd2; font: 700 14px/26px "Open Sans", sans-serif; position: relative; }
.g-act { width: 89px; letter-spacing: -.1px; }
.g-brave { margin-right: 7px; margin-top: -2px; }
.g-app { width: 145px; letter-spacing: -.1px; }
.g-clock { position: absolute; left: 931px; letter-spacing: -.55px; }
.g-tray { margin-left: auto; display: flex; align-items: center; gap: 13px; }
.g-tray .t-wifi { margin-left: 17px; }

/* browser tabs */
.tabs { height: 30px; background: #222; display: flex; align-items: center; }
.tab { width: 239px; height: 30px; display: flex; align-items: center; padding: 0 7px 0 8px; font-size: 14.500px; border-right: 1px solid #777; }
.tab:first-child { width: 244px; padding-left: 12px; }
.tab.nosep { border-right: 0; width: 238px; }
.tab.active { width: 240px; background: #3a3a3a; border: 0; border-radius: 4px 4px 0 0; padding-left: 9px; }
.t-text { width: 184px; margin-left: 8px; letter-spacing: -.15px; }
.tight { letter-spacing: -.35px; }
.tab .x { margin-left: auto; color: #eee; }
.active .t-text { width: 161px; margin-left: 7px; letter-spacing: -.1px; }
.rec { margin-left: 6px; }
.fade { -webkit-mask-image: linear-gradient(90deg, #000 88%, rgba(0,0,0,.2)); mask-image: linear-gradient(90deg, #000 88%, rgba(0,0,0,.2)); }
.plus { margin-left: 12px; }
.winctl { margin-left: auto; padding-right: 12px; display: flex; align-items: center; gap: 21px; color: #eee; }

/* address bar */
.bar { height: 36px; background: #3a3a3a; display: flex; align-items: center; padding: 0 17px 0 15px; }
.navs { width: 157px; display: grid; grid-template-columns: 32px 31px 32px 32px 30px; }
.url { width: 1275px; height: 28px; border-radius: 4px; background: #222; display: flex; align-items: center; padding: 0 9px 0 13px; font-size: 14px; }
.u-host { margin: -2px 0 0 11px; color: #f2f2f2; letter-spacing: -.25px; }
.u-path { margin-top: -2px; color: #8c8c8c; letter-spacing: -.25px; }
.u-right { margin-left: auto; display: flex; align-items: center; }
.vline { width: 1px; height: 16px; background: #aaa; margin: 0 10px 0 9px; }
.vline.dim { background: #777; }
.shield { position: relative; margin-right: 17px; }
.shield b { position: absolute; left: 12px; top: -3px; width: 12px; height: 12px; border-radius: 6px; background: #5c5c72; font: 600 9px/12px "Open Sans", sans-serif; text-align: center; }
.exts { display: grid; grid-template-columns: repeat(12, 32px); justify-items: center; margin-left: 7px; }
.exts svg { width: 16px; height: 16px; }
.bar > .vline { margin: 0 14px 0 5px; }
.queue { margin-right: 19px; }

/* bookmarks */
.marks { height: 34px; background: #3a3a3a; display: grid; align-items: center; padding: 0 0 5px 15px; font-size: 14px; letter-spacing: .22px;
  grid-template-columns: 66px 79px 58px 67px 61px 140px 82px 100px 71px 87px 103px 111px 140px 90px 88px 153px 221px 18px 12px 158px; }
.marks a { display: flex; align-items: center; gap: 9px; line-height: 18px; }
.marks svg { width: 14px; height: 13px; }
.marks .site svg { width: 16px; height: 16px; }
.marks .site { gap: 8px; }
.marks .vline { margin: 0; }
.more { font-size: 18px; line-height: 18px; margin-top: -3px; }

/* meeting header */
.meet { height: 48px; background: #111; display: flex; align-items: center; font-family: Roboto, sans-serif; }
.av { border-radius: 50%; text-align: center; flex: none; }
.av-d { width: 36px; height: 36px; margin-left: 24px; background: #f96400; font: 500 19px/36px Roboto, sans-serif; }
.pres { margin: 2px 0 0 16px; font-size: 18px; color: #fff; letter-spacing: .05px; }
.people { margin-left: auto; width: 173px; height: 48px; background: #070707; border-radius: 0 0 0 8px; display: flex; align-items: center; padding-left: 9px; font: 500 14px/18px Roboto, sans-serif; }
.people p { margin: -1px 0 0 8px; font-weight: 500; white-space: nowrap; letter-spacing: -.05px; }
.av-t { width: 32px; height: 32px; background: #00523f; font: 400 19px/32px Roboto, sans-serif; }
.ctl { width: 272px; height: 48px; background: #fff; border-radius: 0 0 0 8px; display: flex; align-items: center; padding-left: 24px; color: #5f6368; }
.ctl sup { font: 500 12px/12px Roboto, sans-serif; width: 25px; margin-top: -12px; margin-left: -3px; letter-spacing: -.2px; }
.ctl i { width: 1px; height: 24px; background: #e3e3e3; }
.ctl i + svg { margin: 0 24px 0 25px; }
.ctl time { font-size: 21px; margin-left: 18px; letter-spacing: -.5px; }
.ctl time + time { margin-left: 10px; }
.you { width: 86px; height: 48px; background: #f4f6fa; color: #3c4043; display: flex; padding-left: 4px; font-size: 13px; }
.you > span:first-child { width: 24px; align-self: flex-end; line-height: 19px; font-size: 12.500px; }
.you svg { align-self: flex-end; margin: 0 0 2px 9px; }
.av-m { width: 30px; height: 30px; margin-top: 9px; background: #009aac; color: #fff; font: 500 17px/30px Roboto, sans-serif; }

/* shared window */
.share { position: relative; width: 1611px; height: 905px; margin-left: 154px; display: flex; flex-direction: column; color: #dcdadc; }
.a-title { height: 23px; background: #000; display: flex; align-items: center; padding: 0 21px 1px 3px; font-size: 15.500px; line-height: 20px; color: #d6d6d6; }
.a-title > span { margin-left: 6px; letter-spacing: -.03px; }
.a-win { margin-left: auto; display: flex; gap: 38px; }
.a-menu { height: 22px; background: #3e3b3e; border-bottom: 1px solid #2d2b2d; display: grid; grid-template-columns: 33px 35px 40px 38px 60px 60px; align-items: center; padding-left: 7px; font-size: 12.500px; letter-spacing: -.3px; }
.a-tabs { height: 37px; background: #434043; display: flex; font-size: 15px; }
.a-tabs > div { border-bottom: 1px solid #302e30; display: flex; align-items: center; color: #bfbdbf; }
.home { width: 154px; border-right: 1px solid #302e30; padding-left: 15px; font-size: 16px; letter-spacing: -.1px; }
.home span { width: 73px; }
.home span:last-child { margin-left: 3px; width: 60px; letter-spacing: -.3px; }
.doc { width: 189px; border-right: 1px solid #302e30; padding-left: 30px; letter-spacing: -.45px; }
.a-tabs > .on { width: 188px; background: #4d4a4d; border: 0; padding-left: 28px; color: #d5d3d5; letter-spacing: -.4px; }
.on svg { margin-left: auto; margin-right: 9px; }
.a-tabs > .sign { flex: 1; justify-content: flex-end; padding-right: 25px; }
.sign b { font: 600 16.500px/20px "Open Sans", sans-serif; color: #eee; margin-left: 33px; letter-spacing: .55px; }
.sign svg + svg { margin-left: 21px; }
.a-tools { height: 49px; background: #4d4a4d; border-bottom: 1px solid #3a383a; display: flex; align-items: center; padding: 0 0 2px 3px; color: #c8c6c8; font-size: 13.500px; }
.cells { display: flex; }
.cells svg { width: 26px; height: 26px; margin: 0 10px; }
.cells .off { color: #858385; }
.c-page { margin-left: 164px; }
.field { height: 30px; line-height: 30px; border-bottom: 1px solid #625f62; }
.f-pg { width: 31px; margin-left: 10px; text-align: center; }
.of { margin-left: 9px; width: 43px; letter-spacing: -.3px; }
.sep { width: 1px; height: 30px; background: #3b393b; }
.c-ptr { margin-left: 11px; }
.f-zoom { width: 73px; margin-left: 11px; padding: 0 8px 0 11px; display: flex; align-items: center; justify-content: space-between; letter-spacing: -.5px; }
.fit { width: 26px; height: 26px; margin-left: 20px; }
.fitc { margin-left: 3px; }
.kb { width: 26px; height: 26px; margin-left: 22px; }
.s2 { margin: 0 10px 0 20px; }
.c-right { margin-left: auto; padding-right: 5px; }

.a-body { height: 732px; display: flex; }
.rail { width: 46px; background: #4d4a4d; padding: 16px 0 0 10px; display: flex; flex-direction: column; gap: 22px; color: #c0bec0; }
.rail svg { width: 26px; height: 26px; }
.strip { width: 19px; background: #434043; display: flex; align-items: center; justify-content: center; padding-bottom: 2px; }
.s-right { width: 20px; padding-right: 3px; }
.view { width: 1268px; background: #2a282a; overflow: hidden; padding-left: 161px; }
.page { width: 947px; height: 694px; background: #fdfcfe; padding: 5px 0 0 42px; color: #151515; }
.next { margin-top: 8px; height: 40px; }
.frame { width: 863px; height: 647px; border: 1px solid #5a5a5a; padding-top: 91px; }
.para { padding-left: 73px; font: 21.500px/26px "DejaVu Sans", sans-serif; white-space: nowrap; letter-spacing: .12px; }
.ex, .get { padding-left: 73px; font: 24px/36px "DejaVu Sans", sans-serif; letter-spacing: .13px; margin-top: 19px; white-space: nowrap; }
.row { display: flex; font: 26px/31px "Liberation Serif", serif; color: #222; }
.row1 { margin-top: 4px; padding-left: 44px; gap: 89px; }
.mx { display: grid; grid-template-rows: 33px repeat(3, 31.300px); align-items: stretch; }
.mx span { line-height: 33.300px; padding-left: 12px; }
.mx span:nth-child(-n+4) { line-height: 35px; border-bottom: 1.500px solid #444; }
.mx span:nth-child(4n+1) { border-right: 1.500px solid #444; }
.mx sub { font-size: 17px; line-height: 1px; vertical-align: -4px; letter-spacing: -.3px; }
.mr { width: 351px; grid-template-columns: 85px 89px 91px 86px; }
.mr span:nth-child(4n+1) { padding-left: 22px; }
.mr span:nth-child(n+2):nth-child(-n+4), .ms span:nth-child(n+2):nth-child(-n+4) { padding-left: 26px; }
.ms { width: 334px; grid-template-columns: 90px 90px 88px 66px; }
.ms span:nth-child(4n+1) { padding-left: 27px; }
.get { margin-top: 21px; }
.row2 { margin-top: 2px; padding-left: 53px; }
.mu { width: 341px; margin-top: 6px; grid-template: 36px repeat(3, 31.500px) / 91px 91px 91px 68px; }
.mu span:nth-child(-n+4) { border-bottom: 2px solid #808080; line-height: 36px; }
.mu span:nth-child(4n+1) { padding-left: 12px; }
.mx.mu sub { vertical-align: -6px; letter-spacing: .3px; }
.and { font: 23.500px/36px "DejaVu Sans", sans-serif; margin: 66px 0 0 24px; width: 77px; color: #151515; }
.sel { width: 318px; height: 144px; margin-top: 1px; border: 2px solid #4d6478; background: #95badc; }
.mc { grid-template-columns: 80px 84px 85px 65px; color: #1c2733; grid-template-rows: 32px repeat(3, 31.500px); }
.mc span:nth-child(-n+4) { border-color: #3c5366; line-height: 33px; }
.mc span:nth-child(4n+1) { padding-left: 7px; border-color: #3c5366; }
.mx .bar-r { display: inline-block; font: italic 13px/11px "Liberation Serif", serif; border-top: 1px solid #333; margin-left: 6px; vertical-align: -1px; }
.foot { display: flex; justify-content: space-between; padding: 0 52px 0 52px; margin-top: 34px; font: 17px/20px "Liberation Sans", sans-serif; }

.vscroll { width: 18px; background: #171517; display: flex; flex-direction: column; align-items: center; padding: 5px 0; color: #777; }
.vscroll i { width: 16px; height: 31px; background: #4d4a4d; margin-top: 259px; }
.flip { transform: scaleY(-1); margin-top: auto; }
.panel { width: 240px; background: #4d4a4d; padding-top: 15px; }
.search { margin: 0 15px 0 15px; height: 38px; border: 1px solid #666366; background: #464346; padding-left: 12px; font-size: 14px; line-height: 36px; color: #b5b3b5; }
.listwrap { display: flex; height: 502px; margin-top: 14px; border-bottom: 1px solid #3b393b; }
.listwrap ul { width: 222px; overflow: hidden; list-style: none; }
.listwrap li { height: 47.600px; display: flex; align-items: center; padding-left: 25px; font-size: 15.500px; letter-spacing: -.1px; color: #dddbdd; white-space: nowrap; }
.listwrap li:first-child { margin-top: -2px; }
.listwrap li.wide { letter-spacing: .4px; }
.listwrap li svg:first-child { width: 24px; height: 24px; margin-right: 11px; }
.listwrap .chev { width: 13px; height: 9px; margin-left: auto; margin-right: 23px; color: #eee; }
.lscroll { width: 18px; background: #171517; display: flex; flex-direction: column; align-items: center; padding: 5px 0; color: #777; }
.lscroll i { width: 16px; height: 410px; background: #4d4a4d; margin-top: 5px; }
.c1 { color: #12b0c4; } .c2 { color: #f25aa6; } .c3 { color: #fa7378; } .c4 { color: #f7e326; } .c5 { color: #9d7cfb; }
.c6 { color: #86ee52; } .c7 { color: #fa5fae; } .c8 { color: #a184f0; } .c9 { color: #bf6ff0; }
.trial { text-align: center; padding: 36px 2px 0 0; }
.trial p { font-size: 13px; line-height: 17px; font-weight: 600; letter-spacing: .15px; color: #e8e6e8; padding-right: 3px; }
.trial button { width: 157px; height: 42px; border: 0; border-radius: 21px; background: #4860f0; color: #dfe8ff; font: 12px "Open Sans", sans-serif; letter-spacing: -.2px; margin-top: 20px; }

/* floating pieces of the shared desktop */
.pop { position: absolute; left: 1063px; top: 508px; width: 193px; height: 42px; background: #1f1d20; border-radius: 3px; display: flex; align-items: center; padding-left: 15px; gap: 25px; color: #aaa9aa; }
.pop i { width: 1px; height: 18px; background: #666; margin: 0 -7px 0 -2px; }
.cross { position: absolute; left: 1053px; top: 579px; }
.sharing { position: absolute; left: 597px; top: 809px; width: 418px; height: 45px; background: #303035; box-shadow: 0 1px 3px #333; display: flex; align-items: center; padding: 0 13px 0 10px; font-size: 12.500px; }
.sharing i { width: 7px; height: 12px; border: solid #ccc; border-width: 0 2px; }
.sharing span { margin-left: 11px; width: 234px; letter-spacing: -.29px; }
.sharing button { width: 107px; height: 34px; border: 0; border-radius: 4px; background: #8fa4fb; color: #272b44; font: 12.500px "Open Sans", sans-serif; }
.sharing a { margin-left: 10px; color: #8b9bf0; letter-spacing: -.3px; }

/* taskbar */
.task { height: 42px; background: #111013; display: flex; }
.start { width: 50px; display: flex; align-items: center; padding-left: 16px; }
.find { width: 361px; background: #434043; border-top: 1px solid #575457; display: flex; align-items: center; gap: 11px; padding: 0 0 3px 12px; font-size: 15px; letter-spacing: -.02px; color: #c4c2c4; }
.apps { display: flex; margin-left: -1px; }
.apps span { width: 52px; display: flex; align-items: center; justify-content: center; position: relative; padding-bottom: 1px; }
.apps span svg { width: 26px; height: 26px; }
.run::after { content: ""; position: absolute; bottom: 0; left: 5px; right: 4px; height: 3px; background: #b3a873; }
.apps .cur { background: #343236; }
.cur::after { left: 0; right: 0; }
.tray { margin-left: auto; width: 350px; display: flex; align-items: center; gap: 10px; padding-left: 4px; border-right: 1px solid #666; margin-right: 4px; }
.spk { margin-left: -3px; }
.keys { margin-left: -2px; }
.tray p { text-align: center; font-size: 12px; line-height: 19px; color: #ddd; white-space: nowrap; }
.lang { width: 26px; }
.when { width: 64px; margin-left: 2px; letter-spacing: -.1px; }
.note { position: relative; margin-left: 10px; top: -2px; }
.note b { position: absolute; left: 8px; top: 8px; width: 18px; height: 18px; border-radius: 9px; background: #2c2c2e; border: 1px solid #777; font: 600 11px/16px "Open Sans", sans-serif; text-align: center; color: #eee; }
```
